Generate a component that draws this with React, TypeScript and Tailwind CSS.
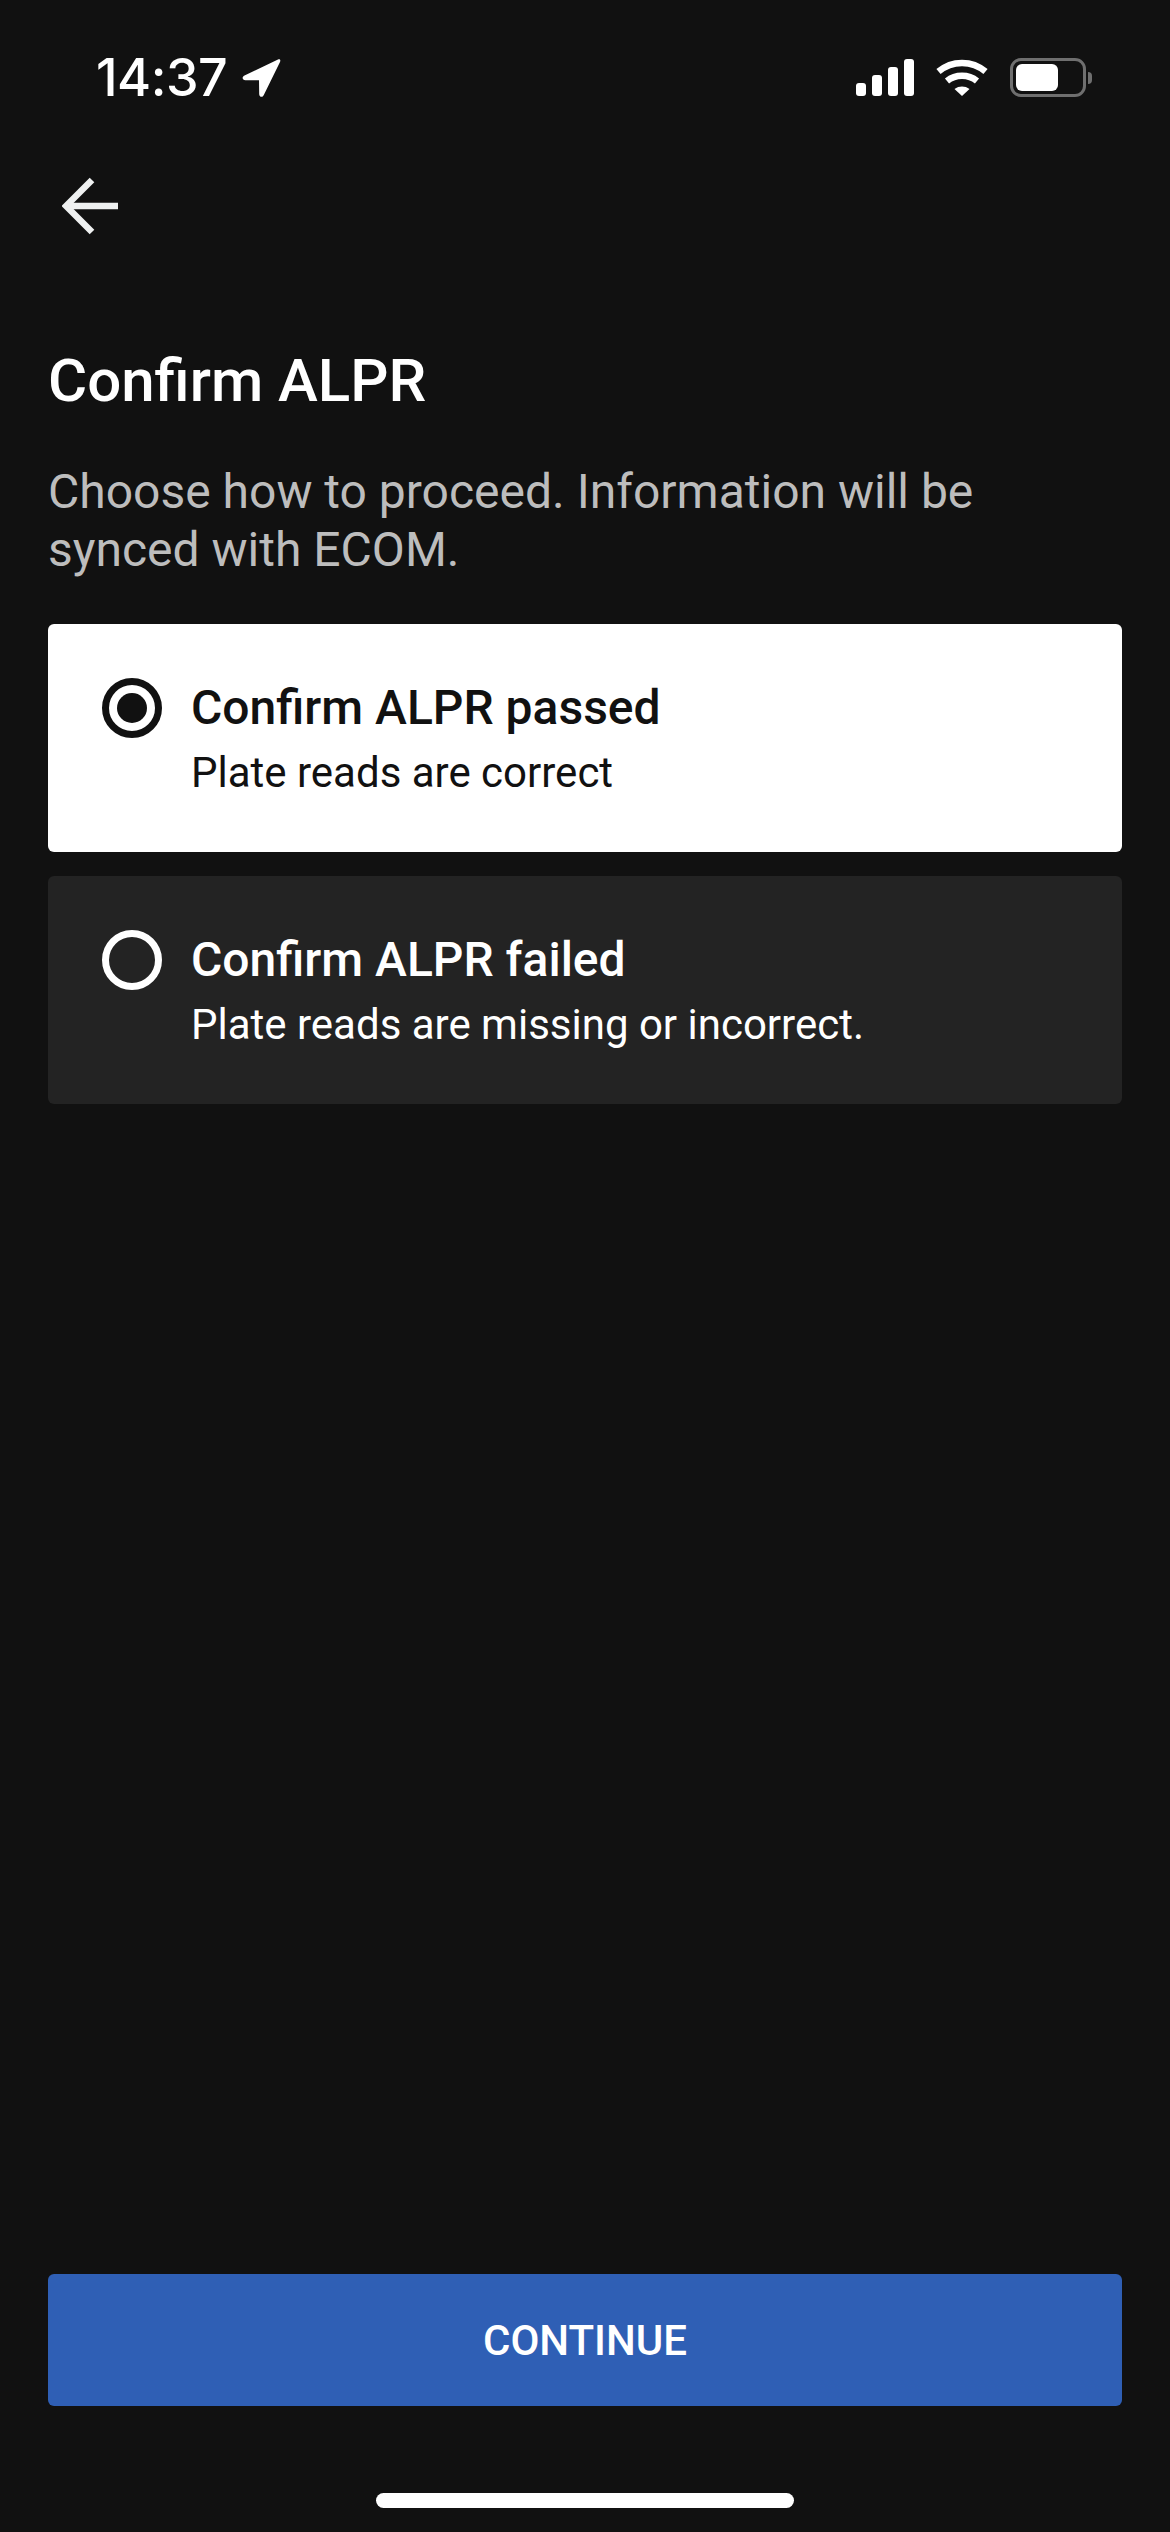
const options = [
  { title: 'Confirm ALPR passed', text: 'Plate reads are correct', selected: true },
  { title: 'Confirm ALPR failed', text: 'Plate reads are missing or incorrect.', selected: false },
];

const StatusBar = () => (
  <div className="flex h-[108px] items-end justify-between pl-[96px] pr-[78px] pb-[2px]">
    <div className="flex items-center gap-[14px]">
      <span className="font-['Inter',sans-serif] text-[52px] leading-[56px] font-medium tracking-[-0.5px] text-white">14:37</span>
      <svg width="40" height="40" viewBox="0 0 40 40" fill="white">
        <path d="M37 1.5 3.5 17.5c-3 1.6-2.2 4.7 1 4.7l13.5.1.2 13.7c0 3.2 3.3 3.9 4.6 1L39 4c.9-2-.2-3.200-2-2.500Z" />
      </svg>
    </div>
    <div className="flex items-center gap-[22px] pb-[9px]">
      <svg width="58" height="37" viewBox="0 0 58 37" fill="white">
        <rect x="0" y="24" width="10" height="13" rx="3" />
        <rect x="16" y="16" width="10" height="21" rx="3" />
        <rect x="32" y="8" width="10" height="29" rx="3" />
        <rect x="48" y="0" width="10" height="37" rx="3" />
      </svg>
      <svg width="52" height="37" viewBox="0 0 52 37" fill="none" stroke="white" strokeWidth="6.500">
        <path d="M2.500 12.500C16 1 36 1 49.500 12.500" />
        <path d="M11 22c8.500-7 21.500-7 30 0" />
        <path d="M18.500 30c4.500-3.300 10.500-3.300 15 0L26 37Z" fill="white" stroke="none" />
      </svg>
      <div className="flex items-center gap-[2px]">
        <div className="h-[39px] w-[76px] rounded-[11px] border-[3px] border-[#6f6f6f] p-[3px]">
          <div className="h-full w-[42px] rounded-[6px] bg-white" />
        </div>
        <div className="h-[12px] w-[4px] rounded-r-full bg-[#6f6f6f]" />
      </div>
    </div>
  </div>
);

export default function App() {
  return (
    <div className="flex min-h-[2532px] flex-col bg-[#111111] font-['Roboto',sans-serif]">
      <StatusBar />
      <div className="flex h-[196px] items-center pl-[62px]">
        <svg width="62" height="58" viewBox="0 0 62 58" fill="none" stroke="#eff1f1" strokeWidth="6.500">
          <path d="M30 3 4 29l26 26" />
          <path d="M4 29h52" />
        </svg>
      </div>
      <div className="flex flex-1 flex-col px-[48px]">
        <h1 className="mt-[42px] text-[60px] leading-[70px] font-medium text-white">Confirm ALPR</h1>
        <p className="mt-[47px] text-[48px] leading-[58px] text-[#bdbdbd]">
          Choose how to proceed. Information will be
          <br />
          synced with ECOM.
        </p>
        <div className="mt-[45px] flex flex-col gap-[24px]">
          {options.map((o) => (
            <div
              key={o.title}
              className={`flex h-[228px] gap-[29px] rounded-[6px] px-[54px] pt-[54px] ${o.selected ? 'bg-white text-[#111111]' : 'bg-[#232323] text-white'}`}
            >
              {o.selected ? (
                <div className="flex h-[60px] w-[60px] items-center justify-center rounded-full border-[7px] border-[#111111]">
                  <div className="h-[30px] w-[30px] rounded-full bg-[#111111]" />
                </div>
              ) : (
                <div className="h-[60px] w-[60px] rounded-full border-[7px] border-white" />
              )}
              <div className="flex flex-col pt-[2px]">
                <div className="text-[48px] leading-[56px] font-medium">{o.title}</div>
                <div className="mt-[12px] text-[42px] leading-[50px]">{o.text}</div>
              </div>
            </div>
          ))}
        </div>
        <div className="mt-auto flex h-[132px] items-center justify-center rounded-[6px] bg-[#2f5fb5] text-[42px] font-medium text-white">
          CONTINUE
        </div>
      </div>
      <div className="flex h-[126px] justify-center pt-[87px]">
        <div className="h-[15px] w-[418px] rounded-full bg-white" />
      </div>
    </div>
  );
}
